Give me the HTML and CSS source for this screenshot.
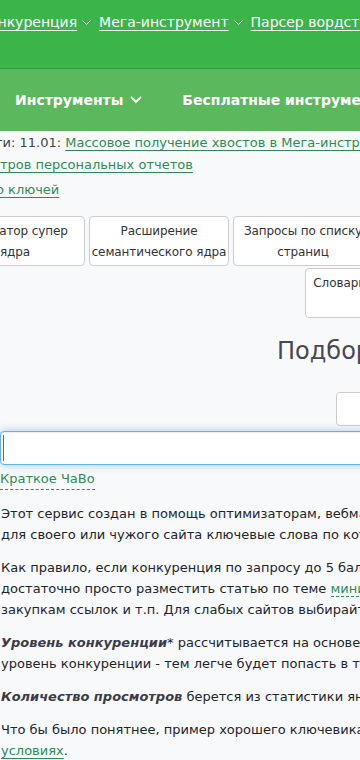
FILE: index.html
```html
<!DOCTYPE html>
<html lang="ru">
<head>
<meta charset="utf-8">
<title>Подбор ключей</title>
<link rel="stylesheet" href="styles.css">
</head>
<body>
<header class="topbar">
  <nav class="topnav">
    <span class="topnav-item"><a href="#">Конкуренция</a><svg class="chev-sm" width="9" height="6" viewBox="0 0 9 6"><polyline points="0.5,0.5 4.5,4.5 8.5,0.5" fill="none" stroke="#cfe9d3" stroke-width="1"/></svg></span>
    <span class="topnav-item"><a href="#">Мега-инструмент</a><svg class="chev-sm" width="9" height="6" viewBox="0 0 9 6"><polyline points="0.5,0.5 4.5,4.5 8.5,0.5" fill="none" stroke="#cfe9d3" stroke-width="1"/></svg></span>
    <span class="topnav-item"><a href="#">Парсер вордстата</a></span>
  </nav>
</header>
<nav class="mainnav">
  <span class="mainnav-item">Инструменты<svg class="chev-lg" width="12" height="8" viewBox="0 0 12 8"><polyline points="1,1 6,6 11,1" fill="none" stroke="#ffffff" stroke-width="1.8"/></svg></span>
  <span class="mainnav-item">Бесплатные инструменты</span>
</nav>
<main class="content">
  <div class="news">
    <div class="news-line news-first">ти: 11.01: <a class="link" href="#">Массовое получение хвостов в Мега-инструменте</a></div>
    <div class="news-line news-second"><a class="link" href="#">тров персональных отчетов</a></div>
    <div class="news-line news-third"><a class="link" href="#">о ключей</a></div>
  </div>
  <div class="tools tools-row1">
    <a class="tool" href="#">Генератор супер ядра</a>
    <a class="tool" href="#">Расширение семантического ядра</a>
    <a class="tool" href="#">Запросы по списку страниц</a>
  </div>
  <div class="tools tools-row2">
    <a class="tool" href="#">Словарь синонимов</a>
  </div>
  <h1 class="title">Подбор ключей по конкуренции</h1>
  <div class="select-row"><div class="select"></div></div>
  <div class="input"><span class="caret"></span></div>
  <div class="faq"><a class="dashed" href="#">Краткое ЧаВо</a></div>
  <p class="text">Этот сервис создан в помощь оптимизаторам, вебмастерам и копирайтерам, которые хотят найти<br>для своего или чужого сайта ключевые слова по которым легко продвинуться.</p>
  <p class="text">Как правило, если конкуренция по запросу до 5 баллов, то для попадания в топ<br>достаточно просто разместить статью по теме <a class="dashed-inline" href="#">минимальной</a> оптимизации<br>закупкам ссылок и т.п. Для слабых сайтов выбирайте запросы с низкой конкуренцией.</p>
  <p class="text"><b class="term">Уровень конкуренции</b>* рассчитывается на основе анализа выдачи. Чем ниже<br>уровень конкуренции - тем легче будет попасть в топ.</p>
  <p class="text"><b class="term">Количество просмотров</b> берется из статистики яндекса.</p>
  <p class="text">Что бы было понятнее, пример хорошего ключевика при нормальных<br><a class="link" href="#">условиях</a>.</p>
</main>
</body>
</html>
```

FILE: styles.css
```css
html, body {
  margin: 0;
  padding: 0;
  width: 360px;
  overflow: hidden;
  background: #f8f9fa;
}
body {
  font-family: "DejaVu Sans", sans-serif;
  color: #212529;
}
a { text-decoration: none; }

.topbar {
  height: 68px;
  background: #3bb44a;
  border-bottom: 1px solid #2f9d3e;
}
.topnav {
  display: flex;
  white-space: nowrap;
  padding-top: 12px;
  margin-left: -21px;
  font-size: 14px;
  line-height: 20px;
}
.topnav-item {
  display: flex;
  align-items: center;
  margin-right: 8px;
}
.topnav-item a {
  color: #ffffff;
  text-decoration: underline;
  text-decoration-thickness: 1px;
  text-underline-offset: 3px;
}
.chev-sm { margin-left: 5px; margin-top: 1px; }

.mainnav {
  height: 62px;
  background: #5cb85c;
  display: flex;
  align-items: center;
  padding-left: 15px;
  white-space: nowrap;
}
.mainnav-item {
  color: #fff;
  font-weight: bold;
  font-size: 14px;
  display: flex;
  align-items: center;
  margin-right: 40px;
}
.chev-lg { margin-left: 7px; }

.content {
  font-size: 13px;
  white-space: nowrap;
}
.link {
  color: #2e8b57;
  text-decoration: underline;
  text-underline-offset: 3px;
}
.news { color: #444; }
.news-line { line-height: 22px; }
.news-first { margin-top: 1px; margin-left: -5px; }
.news-third { margin-top: 3px; margin-left: -4px; }

.tools {
  display: flex;
  gap: 4px;
}
.tools-row1 { margin-top: 15px; margin-left: -55px; }
.tools-row2 { margin-top: 2px; margin-left: 305px; }
.tool {
  box-sizing: border-box;
  flex: none;
  width: 140px;
  height: 50px;
  padding: 4px 0;
  background: #fff;
  border: 1px solid #ccc;
  border-radius: 4px;
  color: #333;
  font-size: 12px;
  letter-spacing: -0.1px;
  text-align: center;
  white-space: normal;
  line-height: 21px;
}

.title {
  margin: 19px 0 0;
  padding-left: 277px;
  font-size: 24px;
  line-height: 28px;
  font-weight: normal;
  color: #484852;
}
.select-row {
  margin-top: 27px;
  padding-left: 336px;
}
.select {
  box-sizing: border-box;
  width: 200px;
  height: 34px;
  background: #fff;
  border: 1px solid #ccc;
  border-radius: 4px;
}
.input {
  box-sizing: border-box;
  margin-top: 5px;
  width: 900px;
  height: 34px;
  background: #fff;
  border: 1px solid #66afe9;
  border-radius: 4px;
  box-shadow: inset 0 1px 1px rgba(0,0,0,.075), 0 0 8px rgba(102,175,233,.6);
  display: flex;
  align-items: center;
  padding-left: 2px;
}
.caret {
  width: 1px;
  height: 26px;
  background: #6f6a4a;
}
.faq {
  margin-top: 3px;
  line-height: 22px;
  margin-bottom: 13px;
}
.dashed {
  color: #2e8b57;
  border-bottom: 1px dashed #2e8b57;
  padding-bottom: 3px;
}
.dashed-inline {
  color: #2e8b57;
  border-bottom: 1px dashed #2e8b57;
}
.text {
  margin: 0 0 12px;
  line-height: 21px;
  padding-left: 1px;
}
.term {
  font-style: italic;
  color: #3c3c48;
}
```
